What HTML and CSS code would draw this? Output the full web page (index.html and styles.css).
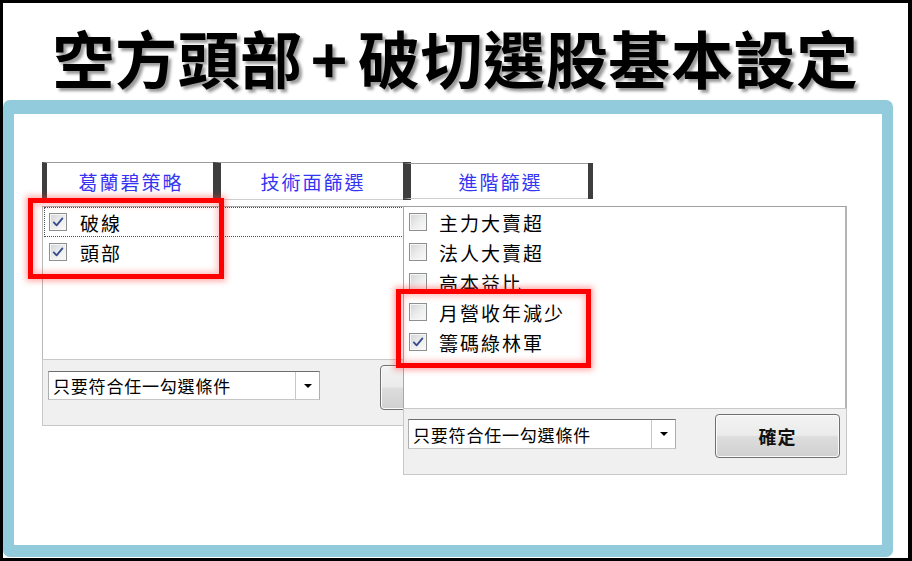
FILE: index.html
```html
<!DOCTYPE html>
<html lang="zh-Hant">
<head>
<meta charset="utf-8">
<title>空方頭部+破切選股基本設定</title>
<link rel="stylesheet" href="styles.css">
</head>
<body>
<div class="frame">
  <h1 class="title">空方頭部<span class="plus">+</span>破切選股基本設定</h1>
  <div class="panel">
    <div class="canvas">

      <div class="win win-back">
        <div class="tabs">
          <div class="tab tab-first w1">葛蘭碧策略</div>
          <div class="tab w2">技術面篩選</div>
          <div class="tab-end"></div>
        </div>
        <div class="gap"></div>
        <div class="list">
          <div class="item focus">
            <span class="cb"><svg viewBox="0 0 16 16"><polyline points="3.8,8.4 6.6,11.4 12.4,4.4"/></svg></span>
            <span class="lbl">破線</span>
          </div>
          <div class="item">
            <span class="cb"><svg viewBox="0 0 16 16"><polyline points="3.8,8.4 6.6,11.4 12.4,4.4"/></svg></span>
            <span class="lbl">頭部</span>
          </div>
        </div>
        <div class="bottom">
          <div class="combo">
            <span class="combo-text">只要符合任一勾選條件</span>
            <span class="combo-btn"><span class="arrow"></span></span>
          </div>
          <div class="btn">確定</div>
        </div>
      </div>

      <div class="win win-front">
        <div class="tabs">
          <div class="tab tab-mid w3">進階篩選</div>
          <div class="tab-last"></div>
        </div>
        <div class="gap"></div>
        <div class="list">
          <div class="item">
            <span class="cb empty"></span>
            <span class="lbl">主力大賣超</span>
          </div>
          <div class="item">
            <span class="cb empty"></span>
            <span class="lbl">法人大賣超</span>
          </div>
          <div class="item">
            <span class="cb empty"></span>
            <span class="lbl">高本益比</span>
          </div>
          <div class="item">
            <span class="cb empty"></span>
            <span class="lbl">月營收年減少</span>
          </div>
          <div class="item">
            <span class="cb"><svg viewBox="0 0 16 16"><polyline points="3.8,8.4 6.6,11.4 12.4,4.4"/></svg></span>
            <span class="lbl">籌碼綠林軍</span>
          </div>
        </div>
        <div class="bottom">
          <div class="combo">
            <span class="combo-text">只要符合任一勾選條件</span>
            <span class="combo-btn"><span class="arrow"></span></span>
          </div>
          <div class="btn">確定</div>
        </div>
      </div>

      <div class="mark mark-1"></div>
      <div class="mark mark-2"></div>
    </div>
  </div>
</div>
</body>
</html>
```

FILE: styles.css
```css
* { box-sizing: border-box; }

html, body {
  margin: 0;
  padding: 0;
  background: #ffffff;
}

body {
  width: 912px;
  height: 561px;
  overflow: hidden;
  font-family: "Noto Sans CJK TC", "Noto Sans CJK SC", "Noto Sans", sans-serif;
  color: #000;
}

.frame {
  width: 912px;
  height: 561px;
  border-style: solid;
  border-color: #000;
  border-width: 3px 4px 3px 3px;
  display: flex;
  flex-direction: column;
}

.title {
  margin: 0;
  height: 97px;
  padding-top: 23px;
  font-size: 62px;
  line-height: 62px;
  font-weight: 700;
  letter-spacing: 0.6px;
  text-align: center;
  white-space: nowrap;
  text-shadow: 3px 3px 3px rgba(0, 0, 0, 0.4);
}

.plus {
  margin: 0 10px 0 8px;
}

.panel {
  width: 890px;
  height: 457px;
  border-style: solid;
  border-color: #92cbdc;
  border-width: 14px 11px 12px 11px;
  border-radius: 7px;
  background: #fff;
}

.canvas {
  position: relative;
  width: 100%;
  height: 100%;
}

/* windows placed on the screenshot canvas */
.win {
  position: absolute;
  display: flex;
  flex-direction: column;
}

.win-back {
  left: 28px;
  top: 48px;
  width: 480px;
  height: 264px;
}

.win-front {
  left: 389px;
  top: 49px;
  width: 444px;
  height: 312px;
}

/* tabs */
.tabs {
  display: flex;
  height: 38px;
  flex: none;
}

.win-front .tabs { height: 36px; }

.tab {
  height: 100%;
  border-top: 1px solid #9c9c9c;
  border-bottom: 1px solid #cfcfcf;
  border-left: 8px solid #3e3e3e;
  background: #fff;
  color: #3434f2;
  font-size: 19px;
  letter-spacing: 2px;
  text-indent: 2px;
  display: flex;
  align-items: center;
  justify-content: center;
  white-space: nowrap;
}

.tab-first { border-left-width: 5px; }
.w1 { width: 171px; }
.w2 { width: 190px; }
.w3 { width: 185px; }

.tab-end {
  width: 8px;
  height: 100%;
  background: #3e3e3e;
}

.tab-last {
  width: 5px;
  height: 100%;
  background: #3e3e3e;
}

.gap { flex: none; height: 6px; }
.win-front .gap { height: 7px; }

/* list */
.list {
  flex: none;
  background: #fff;
  display: flex;
  flex-direction: column;
}

.win-back .list {
  height: 153px;
  border-top: 1px solid #a9a9a9;
  border-left: 1px solid #b8b8b8;
  padding-left: 1px;
}

.win-front .list {
  height: 202px;
  border-top: 1px solid #a0a0a0;
  border-left: 1px solid #a8a8a8;
  border-right: 2px solid #b4b4b4;
}

.item {
  height: 30px;
  display: flex;
  align-items: center;
  gap: 12px;
  padding-left: 5px;
  font-size: 19px;
  letter-spacing: 2px;
  white-space: nowrap;
}

.win-back .item { padding-left: 5px; gap: 13px; }

.item.focus {
  outline: 1px dotted #4a4a4a;
  outline-offset: -1px;
}

.cb {
  flex: none;
  width: 18px;
  height: 18px;
  border: 1px solid #8e8f8f;
  background: linear-gradient(135deg, #d2d4d8 0%, #eeeeee 55%, #fbfbfb 100%);
  box-shadow: inset 0 0 0 1px #f6f6f6;
  display: flex;
  align-items: center;
  justify-content: center;
}

.cb svg {
  width: 16px;
  height: 16px;
}

.cb polyline {
  fill: none;
  stroke: #354c8c;
  stroke-width: 1.8;
  stroke-linecap: round;
  stroke-linejoin: round;
}

.lbl { line-height: 1; }

/* bottom bar */
.bottom {
  flex: none;
  height: 67px;
  background: #f0f0f0;
  border: 1px solid #c8c8c8;
  border-right: none;
  display: flex;
  align-items: flex-start;
  padding-left: 5px;
}

.win-front .bottom {
  border-right: 1px solid #c8c8c8;
  padding-left: 4px;
  gap: 39px;
}

.win-back .bottom { gap: 60px; }

.combo {
  flex: none;
  display: flex;
  background: #fff;
  border-style: solid;
  border-width: 1px;
  border-color: #6f6f6f #adadad #c6c6c6 #adadad;
}

.win-back .combo {
  width: 272px;
  height: 29px;
  margin-top: 11px;
}

.win-front .combo {
  width: 268px;
  height: 30px;
  margin-top: 10px;
}

.combo-text {
  flex: 1;
  display: flex;
  align-items: center;
  padding-left: 4px;
  font-size: 17px;
  letter-spacing: 0.8px;
  white-space: nowrap;
}

.combo-btn {
  flex: none;
  width: 24px;
  border-left: 1px solid #c8c8c8;
  display: flex;
  align-items: center;
  justify-content: center;
}

.arrow {
  width: 0;
  height: 0;
  border-left: 4px solid transparent;
  border-right: 4px solid transparent;
  border-top: 4px solid #000;
}

.btn {
  flex: none;
  width: 125px;
  height: 44px;
  margin-top: 5px;
  border: 1px solid #707070;
  border-radius: 4px;
  background: linear-gradient(to bottom, #f3f3f3 0%, #ebebeb 48%, #dddddd 52%, #d0d0d0 100%);
  box-shadow: inset 0 0 0 1px #fbfbfb;
  display: flex;
  align-items: center;
  justify-content: center;
  font-size: 18px;
  font-weight: 700;
  letter-spacing: 1px;
  color: #111;
}

.win-back .btn { height: 45px; }

/* red highlight boxes laid over the screenshot */
.mark {
  position: absolute;
  border: 5px solid #ff0000;
  box-shadow: 0 0 6px 2px rgba(255, 60, 60, 0.45), inset 0 0 6px 2px rgba(255, 60, 60, 0.35);
}

.mark-1 {
  left: 14px;
  top: 84px;
  width: 196px;
  height: 81px;
}

.mark-2 {
  left: 382px;
  top: 175px;
  width: 195px;
  height: 79px;
}
```
